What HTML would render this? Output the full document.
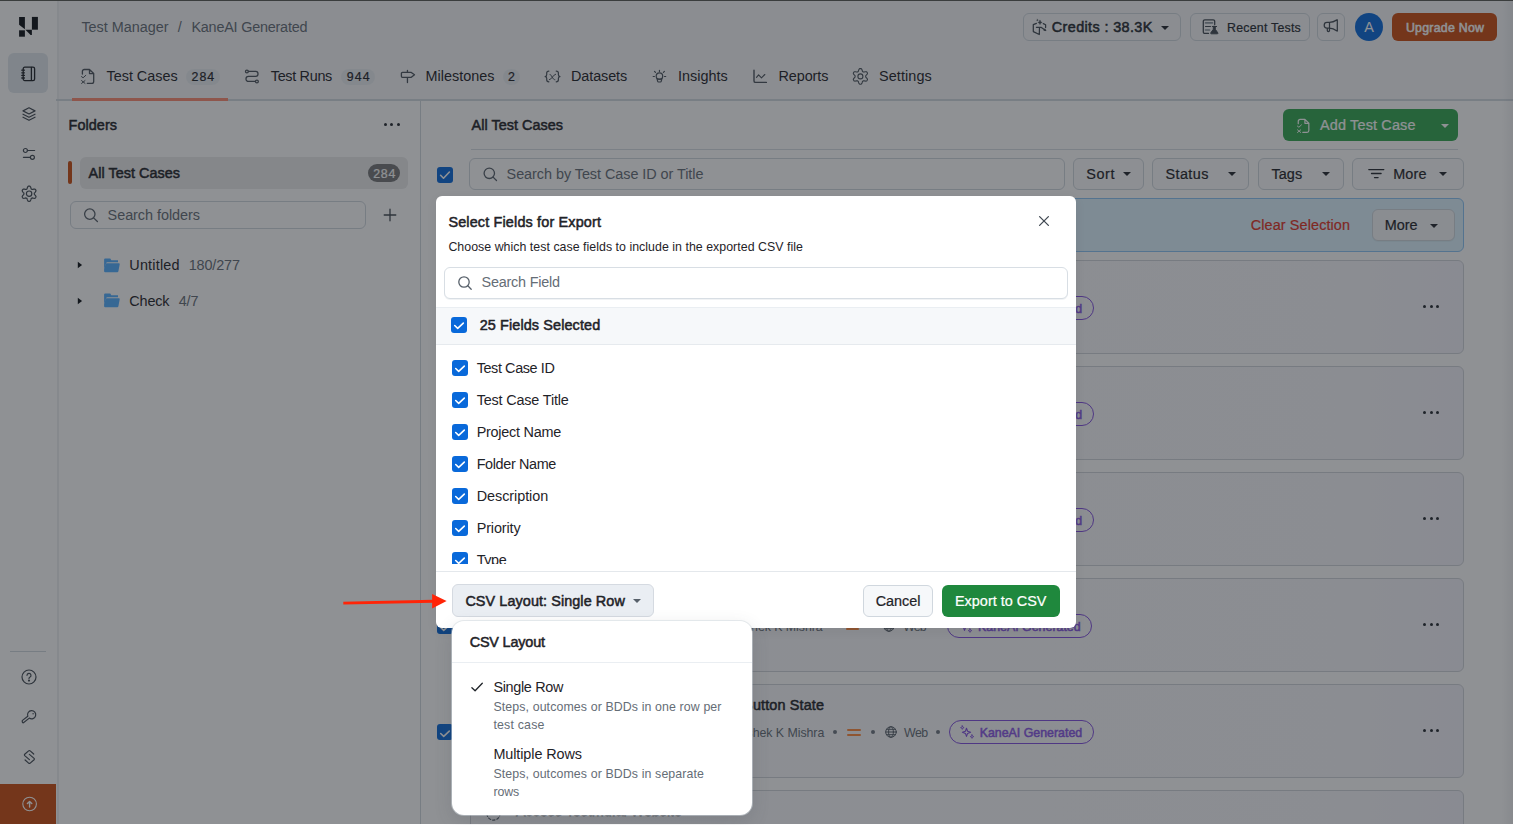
<!DOCTYPE html>
<html lang="en">
<head>
<meta charset="utf-8">
<title>Test Manager - KaneAI Generated</title>
<style>
*{box-sizing:border-box;margin:0;padding:0}
html,body{width:1513px;height:825px;overflow:hidden;background:#fff}
body{font-family:"Liberation Sans",sans-serif;position:relative;color:#1f2328}
.abs,.t,svg.i{position:absolute}
.t{white-space:pre;line-height:20px;height:20px}
#base{position:absolute;left:0;top:0;width:1513px;height:824px;background:#fff;overflow:hidden}
#overlay{position:absolute;left:0;top:0;width:1513px;height:824px;background:rgba(27,31,36,.49)}
.btn{position:absolute;border:1px solid #d0d7de;border-radius:6px;background:#f6f8fa}
.hb{background:transparent}
.card{position:absolute;left:469.5px;width:994.5px;height:93.8px;border:1px solid #d1d5da;border-radius:6px;background:linear-gradient(90deg,#fbfbfd 0%,#f8f8fc 88%,#f4f3fb 100%)}
.cb{position:absolute;width:16px;height:16px;border-radius:3px;background:#0969da}
.pill{position:absolute;height:24px;border:1px solid #8250df;border-radius:12px}
.caret{position:absolute;width:0;height:0;border-left:4px solid transparent;border-right:4px solid transparent;border-top:4px solid #24292f}
.dots{position:absolute;width:17px;height:3px}
.dots i{position:absolute;top:0;width:3px;height:3px;border-radius:50%;background:#24292f}
.dot{position:absolute;width:4px;height:4px;border-radius:50%;background:#6e7781}
svg.i{overflow:visible;fill:none;stroke-linecap:round;stroke-linejoin:round}
</style>
</head>
<body>
<div id="base">
<!-- sidebar -->
<div class="abs" style="left:56px;top:0;width:1457px;height:99px;background:#f7f8fa"></div>
<div class="abs" style="left:0;top:0;width:58.5px;height:824px;background:#fff;border-right:2.2px solid #eef0f2"></div>
<svg class="i" style="left:0;top:0" width="56" height="50" viewBox="0 0 56 50"><g fill="#0d1117" stroke="none">
<polygon points="19.1,16.9 24.9,16.9 24.9,29.3 19.1,24.7"/>
<polygon points="19.1,30.3 24.9,30.3 24.9,36.7 19.1,36.7"/>
<polygon points="25.4,29.7 31.9,29.7 31.9,35.1 30.6,35.1"/>
<polygon points="31.9,16.9 37.9,16.9 37.9,29.7 31.9,29.7"/>
</g></svg>
<div class="abs" style="left:8px;top:53px;width:40px;height:40px;border-radius:6px;background:#e1e8ee"></div>
<!-- notebook icon -->
<svg class="i" style="left:20px;top:65px" width="18" height="18" viewBox="0 0 18 18" stroke="#1f2328" stroke-width="1.3">
<rect x="3.2" y="2.2" width="11.4" height="13.4" rx="1.6"/><path d="M11.4 2.4v13M1.8 5.2h2.6M1.8 7.8h2.6M1.8 10.4h2.6M1.8 13h2.6"/></svg>
<!-- layers icon -->
<svg class="i" style="left:21px;top:106px" width="16" height="16" viewBox="0 0 16 16" stroke="#424a53" stroke-width="1.2">
<path d="M8 1.8l6 3.1-6 3.1-6-3.1zM2 8.2l6 3.1 6-3.1M2 11.2l6 3.1 6-3.1"/></svg>
<!-- sliders icon -->
<svg class="i" style="left:21px;top:146px" width="16" height="16" viewBox="0 0 16 16" stroke="#424a53" stroke-width="1.2">
<circle cx="4.4" cy="4.5" r="2"/><path d="M6.6 4.5h7"/><circle cx="11.4" cy="11.3" r="2"/><path d="M2.4 11.3h6.8"/></svg>
<!-- gear icon -->
<svg class="i" style="left:20px;top:185px" width="18" height="18" viewBox="0 0 18 18" stroke="#424a53" stroke-width="1.2"><path d="M14.30 8.70 14.29 8.36 14.39 8.00 14.81 7.56 15.28 7.04 15.70 6.46 15.99 5.84 15.92 5.34 15.68 4.90 15.42 4.48 15.02 4.16 14.34 4.10 13.63 4.17 12.94 4.32 12.35 4.46 11.99 4.38 11.70 4.20 11.40 4.04 11.14 3.77 10.97 3.18 10.76 2.52 10.46 1.86 10.07 1.30 9.60 1.12 9.10 1.10 8.60 1.12 8.13 1.30 7.74 1.86 7.44 2.52 7.23 3.18 7.06 3.77 6.80 4.04 6.50 4.20 6.21 4.38 5.85 4.46 5.26 4.32 4.57 4.17 3.86 4.10 3.18 4.16 2.78 4.48 2.52 4.90 2.28 5.34 2.21 5.84 2.50 6.46 2.92 7.04 3.39 7.56 3.81 8.00 3.91 8.36 3.90 8.70 3.91 9.04 3.81 9.40 3.39 9.84 2.92 10.36 2.50 10.94 2.21 11.56 2.28 12.06 2.52 12.50 2.78 12.92 3.18 13.24 3.86 13.30 4.57 13.23 5.26 13.08 5.85 12.94 6.21 13.02 6.50 13.20 6.80 13.36 7.06 13.63 7.23 14.22 7.44 14.88 7.74 15.54 8.13 16.10 8.60 16.28 9.10 16.30 9.60 16.28 10.07 16.10 10.46 15.54 10.76 14.88 10.97 14.22 11.14 13.63 11.40 13.36 11.70 13.20 11.99 13.02 12.35 12.94 12.94 13.08 13.63 13.23 14.34 13.30 15.02 13.24 15.42 12.92 15.68 12.50 15.92 12.06 15.99 11.56 15.70 10.94 15.28 10.36 14.81 9.84 14.39 9.40 14.29 9.04z"/><circle cx="9.1" cy="8.7" r="2.7"/></svg>
<div class="abs" style="left:10px;top:651px;width:36px;height:1px;background:#d0d7de"></div>
<!-- help -->
<svg class="i" style="left:21px;top:669px" width="16" height="16" viewBox="0 0 16 16" stroke="#424a53" stroke-width="1.2">
<circle cx="8" cy="8" r="7"/><path d="M6 6.300a2 2 0 1 1 2.800 1.900c-.5.300-.8.600-.8 1.200"/><circle cx="8" cy="11.600" r=".5" fill="#424a53"/></svg>
<!-- key -->
<svg class="i" style="left:21px;top:708px" width="16" height="16" viewBox="0 0 16 16" stroke="#424a53" stroke-width="1.200"><path d="M8.300 10.100a4.100 4.100 0 1 0-1.500-1.900L1.500 12.400a.8.800 0 0 0-.3.800l.2 1a.7.700 0 0 0 1 .5l5.900-4.600z"/><circle cx="12.100" cy="5.700" r=".7" fill="#424a53" stroke="none"/></svg>
<!-- S diamond -->
<svg class="i" style="left:21px;top:749px" width="16" height="16" viewBox="0 0 16 16" stroke="#424a53" stroke-width="1.200"><path d="M12.700 5L9.200 1.900a1.200 1.200 0 0 0-1.600 0L3.700 5.300a.9.900 0 0 0 0 1.300L8.400 10.600"/><path d="M4.100 11L7.600 14.100a1.200 1.200 0 0 0 1.600 0L13.100 10.700a.9.900 0 0 0 0-1.300L8.400 5.400"/></svg>
<div class="abs" style="left:0;top:784px;width:56px;height:40px;background:#cb4d12"></div>
<svg class="i" style="left:22px;top:796px" width="16" height="16" viewBox="0 0 16 16" stroke="#ffffff" stroke-width="1.1">
<circle cx="7.600" cy="8" r="6.800"/><path d="M7.600 11V5.600M5.400 7.600l2.200-2.200 2.200 2.200" stroke-width="1.400"/></svg>

<!-- header buttons -->
<div class="btn hb" style="left:1023px;top:13px;width:158px;height:28px"></div>
<div class="caret" style="left:1160.7px;top:25.8px"></div>
<svg class="i" style="left:1031px;top:19px" width="16" height="17" viewBox="0 0 16 17" stroke="#424a53" stroke-width="1.25"><path d="M5.400 4.300L2.300 5.600V12.600L8.300 15.500L8.500 8.300M5.400 8.300H10L14.300 11.300M12.300 4.600L14.600 5.700V8.400"/><path d="M14.700 11.600l-1.900-.2.900-1.400z" fill="#424a53" stroke-width=".6"/><path d="M9 1.300l.65 1.500 1.500.65-1.500.65L9 5.600l-.65-1.500-1.500-.65 1.500-.65z" fill="#424a53" stroke-width=".5"/><path d="M6.400 .2l.25.700.7.250-.7.250-.250.700-.250-.7-.7-.250.7-.250z" fill="#424a53" stroke-width=".3"/></svg>
<div class="btn hb" style="left:1190px;top:13px;width:120px;height:28px"></div>
<svg class="i" style="left:1202px;top:19px" width="18" height="16" viewBox="0 0 18 16" stroke="#424a53" stroke-width="1.300">
<path d="M6.500 14.400H2.800a1.500 1.500 0 0 1-1.500-1.500V2.300A1.500 1.500 0 0 1 2.800 .8h8.400a1.500 1.500 0 0 1 1.500 1.500v3.200"/><path d="M3.500 3.900h7" stroke="#8c959f" stroke-width="1.600"/><path d="M3.500 7.500h5" stroke-width="1.100"/><path d="M3.500 11h4" stroke="#8c959f" stroke-width="1.600"/>
<path d="M10.300 7.500h4.300M11.300 7.700v2.600l-2.500 3.500a.6.600 0 0 0 .5 1h6a.6.600 0 0 0 .5-1l-2.500-3.500V7.700z" fill="#424a53" stroke-width="1"/></svg>
<div class="btn hb" style="left:1317px;top:13px;width:28px;height:28px"></div>
<svg class="i" style="left:1323px;top:19px" width="16" height="16" viewBox="0 0 16 16" stroke="#424a53" stroke-width="1.250">
<path d="M6.500 3.400H4a2.800 2.800 0 0 0 0 5.600h2.500zM6.500 3.400C9.500 3.400 11.500 2.500 14 .9M14.300 .8v11.300M6.500 9c3 0 5 1 7.500 2.900M4.300 9v2.600a1.100 1.100 0 0 0 2.200 0V9"/></svg>
<div class="abs" style="left:1355px;top:13px;width:28px;height:28px;border-radius:50%;background:#0969da"></div>
<div class="abs" style="left:1392px;top:13px;width:105px;height:28px;border-radius:6px;background:#cb4d12"></div>

<!-- tabs -->
<div class="abs" style="left:56px;top:99px;width:1457px;height:2px;background:#d3dae0"></div>
<div class="abs" style="left:72px;top:98.2px;width:156.1px;height:2.5px;background:#fd8c73"></div>
<div class="abs" style="left:186px;top:68.5px;width:34px;height:16px;border-radius:8px;background:#eaeef2"></div>
<div class="abs" style="left:341px;top:68.5px;width:34px;height:16px;border-radius:8px;background:#eaeef2"></div>
<div class="abs" style="left:503px;top:68.5px;width:17px;height:16px;border-radius:8px;background:#eaeef2"></div>
<!-- tab icons -->
<svg class="i" style="left:80px;top:68px" width="16" height="17" viewBox="0 0 16 17" stroke="#4b535c" stroke-width="1.300">
<path d="M2.400 6V3.400a1.900 1.900 0 0 1 1.900-1.900h5.200l4.200 3.900v8a1.900 1.900 0 0 1-1.900 1.900H7.300M9.500 1.500v4.100h4.100"/><path d="M1.500 8.600l1.600 1.200 2.700-2.500M1.600 12.600l3.400 2.800M5 12.600l-3.400 2.800" stroke-width="1"/></svg>
<svg class="i" style="left:244px;top:68px" width="16" height="17" viewBox="0 0 16 17" stroke="#4b535c" stroke-width="1.250">
<circle cx="2.900" cy="3.450" r="1.450"/><path d="M4.400 3.450h7.300a2.480 2.480 0 0 1 0 4.950H4.500a2.520 2.520 0 0 0 0 5.050h6.900"/><circle cx="12.900" cy="13.450" r="1.450"/></svg>
<svg class="i" style="left:400px;top:68px" width="16" height="17" viewBox="0 0 16 17" stroke="#4b535c" stroke-width="1.300">
<path d="M7.450 2.300v2.100M7.450 9.300v5.300M2.400 4.400h8.900l3.200 2.400-3.200 2.500H2.400a1 1 0 0 1-1-1V5.400a1 1 0 0 1 1-1z"/></svg>
<svg class="i" style="left:544px;top:68px" width="17" height="17" viewBox="0 0 17 17" stroke="#4b535c" stroke-width="1.200">
<path d="M4.900 3.100c-1.600 0-2.200.6-2.200 2v1.700c0 1.100-.5 1.750-1.600 1.750 1.100 0 1.600.65 1.600 1.750v1.500c0 1.400.6 2 2.200 2M12.200 3.100c1.600 0 2.200.6 2.200 2v1.700c0 1.100.5 1.750 1.600 1.750-1.100 0-1.600.65-1.600 1.750v1.500c0 1.400-.6 2-2.200 2"/><path d="M5.300 11.800c2.500-.3 4-5.300 6.300-5.600M6 6.400c1.600-.4 2.400 5.600 4.900 5.400" stroke-width="1"/></svg>
<svg class="i" style="left:652px;top:68px" width="16" height="17" viewBox="0 0 16 17" stroke="#4b535c" stroke-width="1.200">
<circle cx="7.450" cy="8.100" r="3.250"/><path d="M5 10.700l.7 2.700a.8.800 0 0 0 .8.600h1.900a.8.800 0 0 0 .8-.6l.7-2.700M5.200 11.100h4.500M7.450 2.300v1.100M2.500 3.400l1 1M12.400 3.400l-1 1M1.200 8.500h1.200M12.500 8.500h1.200"/></svg>
<svg class="i" style="left:752px;top:68px" width="16" height="17" viewBox="0 0 16 17" stroke="#4b535c" stroke-width="1.400">
<path d="M2 2.300v10.600a1.500 1.500 0 0 0 1.500 1.500h10.900"/><path d="M4.500 9.400l2.100-2.600 2.900 3 3.300-3.300" stroke-width="1.100"/></svg>
<svg class="i" style="left:852px;top:68px" width="17" height="17" viewBox="0 0 17 17" stroke="#4b535c" stroke-width="1.100">
<path d="M13.70 8.40 13.69 8.05 13.80 7.69 14.24 7.24 14.73 6.70 15.17 6.10 15.47 5.47 15.40 4.95 15.15 4.50 14.89 4.07 14.47 3.74 13.77 3.69 13.03 3.77 12.32 3.93 11.71 4.08 11.34 3.99 11.05 3.81 10.74 3.65 10.48 3.37 10.31 2.76 10.10 2.07 9.79 1.39 9.40 0.81 8.91 0.62 8.40 0.60 7.89 0.62 7.40 0.81 7.01 1.39 6.70 2.07 6.49 2.76 6.32 3.37 6.06 3.65 5.75 3.81 5.46 3.99 5.09 4.08 4.48 3.93 3.77 3.77 3.03 3.69 2.33 3.74 1.91 4.07 1.65 4.50 1.40 4.95 1.33 5.47 1.63 6.10 2.07 6.70 2.56 7.24 3.00 7.69 3.11 8.05 3.10 8.40 3.11 8.75 3.00 9.11 2.56 9.56 2.07 10.10 1.63 10.70 1.33 11.33 1.40 11.85 1.65 12.30 1.91 12.73 2.33 13.06 3.03 13.11 3.77 13.03 4.48 12.87 5.09 12.72 5.46 12.81 5.75 12.99 6.06 13.15 6.32 13.43 6.49 14.04 6.70 14.73 7.01 15.41 7.40 15.99 7.89 16.18 8.40 16.20 8.91 16.18 9.40 15.99 9.79 15.41 10.10 14.73 10.31 14.04 10.48 13.43 10.74 13.15 11.05 12.99 11.34 12.81 11.71 12.72 12.32 12.87 13.03 13.03 13.77 13.11 14.47 13.06 14.89 12.73 15.15 12.30 15.40 11.85 15.47 11.33 15.17 10.70 14.73 10.10 14.24 9.56 13.80 9.11 13.69 8.75z"/><circle cx="8.400" cy="8.400" r="2.500"/></svg>

<!-- folders panel -->
<div class="abs" style="left:420px;top:101px;width:1px;height:723px;background:#d0d7de"></div>
<div class="dots" style="left:383.8px;top:123.1px"><i style="left:0"></i><i style="left:6.6px"></i><i style="left:13.2px"></i></div>
<div class="abs" style="left:68px;top:161px;width:4px;height:22.500px;border-radius:2px;background:#cb4d12"></div>
<div class="abs" style="left:80px;top:157px;width:328px;height:32px;border-radius:6px;background:#ebebec"></div>
<div class="abs" style="left:368px;top:164px;width:32px;height:18px;border-radius:9px;background:#767778"></div>
<div class="abs" style="left:70px;top:201px;width:296px;height:28px;border:1px solid #d0d7de;border-radius:6px;background:#fff"></div>
<svg class="i" style="left:83px;top:207px" width="16" height="16" viewBox="0 0 16 16" stroke="#57606a" stroke-width="1.300"><circle cx="6.800" cy="7.100" r="5.200"/><path d="M10.600 10.900l3.800 3.600"/></svg>
<svg class="i" style="left:383px;top:208px" width="14" height="14" viewBox="0 0 14 14" stroke="#424a53" stroke-width="1.300"><path d="M7 1.200v11.600M1.200 7h11.600"/></svg>
<svg class="i" style="left:77px;top:261px" width="6" height="8" viewBox="0 0 6 8"><path d="M.8 .7L5.100 4 .8 7.300z" fill="#0d1117" stroke="none"/></svg>
<svg class="i" style="left:77px;top:296.700px" width="6" height="8" viewBox="0 0 6 8"><path d="M.8 .7L5.100 4 .8 7.300z" fill="#0d1117" stroke="none"/></svg>
<svg class="i" style="left:104px;top:257.500px" width="16" height="15" viewBox="0 0 16 15"><path d="M.1 1.400a1 1 0 0 1 1-1h5.200l1 1.900h6.700v1.900H3.300a1.200 1.200 0 0 0-1.100.8L.1 11z" fill="#54aeff"/><path d="M2.600 5.200h12.200a.9.900 0 0 1 .9 1.100l-1.300 7a1.200 1.200 0 0 1-1.200 1H1.200a1.100 1.100 0 0 1-1.100-1.100V11l1.500-5a1 1 0 0 1 1-.8z" fill="#54aeff"/></svg>
<svg class="i" style="left:104px;top:293.200px" width="16" height="15" viewBox="0 0 16 15"><path d="M.1 1.400a1 1 0 0 1 1-1h5.200l1 1.900h6.700v1.900H3.300a1.200 1.200 0 0 0-1.100.8L.1 11z" fill="#54aeff"/><path d="M2.600 5.200h12.200a.9.900 0 0 1 .9 1.100l-1.300 7a1.200 1.200 0 0 1-1.200 1H1.200a1.100 1.100 0 0 1-1.100-1.100V11l1.500-5a1 1 0 0 1 1-.8z" fill="#54aeff"/></svg>

<!-- main heading -->
<div class="abs" style="left:1282.500px;top:109px;width:175.500px;height:32px;border-radius:6px;background:#33a851"></div>
<div class="caret" style="left:1440.8px;top:123.6px;border-top-color:#fff"></div>
<svg class="i" style="left:1295.8px;top:117.7px" width="15" height="16" viewBox="0 0 16 17" stroke="#ffffff" stroke-width="1.300">
<path d="M2.400 6V3.400a1.900 1.900 0 0 1 1.900-1.900h5.200l4.200 3.900v8a1.900 1.900 0 0 1-1.900 1.900H7.300M9.500 1.500v4.100h4.100"/><path d="M1.500 8.600l1.600 1.200 2.700-2.500M1.600 12.600l3.400 2.800M5 12.600l-3.400 2.800" stroke-width="1"/></svg>
<div class="abs" style="left:471px;top:149px;width:987px;height:1px;background:#d8dee4"></div>
<div class="cb" style="left:437.2px;top:167px;width:15.6px;height:15.6px"></div>
<svg class="i" style="left:437px;top:167px" width="16" height="16" viewBox="0 0 16 16" stroke="#fff" stroke-width="1.600"><path d="M3.600 8.300l2.900 2.900 5.900-6.200"/></svg>
<div class="abs" style="left:469px;top:158px;width:596px;height:31.5px;border:1px solid #d0d7de;border-radius:6px;background:#fff"></div>
<svg class="i" style="left:482px;top:166px" width="16" height="16" viewBox="0 0 16 16" stroke="#57606a" stroke-width="1.300"><circle cx="7.300" cy="7.300" r="5.200"/><path d="M11.100 11.100l3.400 3.400"/></svg>
<div class="btn" style="left:1073px;top:158px;width:70.5px;height:31.5px;background:#fbfcfd"></div><div class="caret" style="left:1123px;top:172.3px"></div>
<div class="btn" style="left:1152px;top:158px;width:97px;height:31.5px;background:#fbfcfd"></div><div class="caret" style="left:1228px;top:172.3px"></div>
<div class="btn" style="left:1257.500px;top:158px;width:86px;height:31.5px;background:#fbfcfd"></div><div class="caret" style="left:1322.1px;top:172.3px"></div>
<div class="btn" style="left:1351.500px;top:158px;width:112.5px;height:31.5px;background:#fbfcfd"></div><div class="caret" style="left:1439px;top:172.3px"></div>
<svg class="i" style="left:1368px;top:166px" width="17" height="16" viewBox="0 0 17 16" stroke="#24292f" stroke-width="1.300"><path d="M.8 3.600h15M3.500 7.500h9.600M6.500 11.600h3.600"/></svg>

<!-- selection banner -->
<div class="abs" style="left:469.5px;top:198px;width:994.5px;height:54px;border:1px solid #8cc4f5;border-radius:6px;background:#ddf4ff"></div>
<div class="btn" style="left:1371.5px;top:209.2px;width:83px;height:31.8px;box-shadow:0 1px 0 rgba(27,31,36,.04)"></div><div class="caret" style="left:1430px;top:223.5px"></div>
<div class="card" style="top:260.0px"></div>
<div class="cb" style="left:437.2px;top:300.3px;width:15.6px;height:15.6px"></div>
<svg class="i" style="left:437px;top:300.5px" width="16" height="16" viewBox="0 0 16 16" stroke="#fff" stroke-width="1.6"><path d="M3.700 8.500L6.700 11.300 12.300 6.100"/></svg>
<div class="dot" style="left:833.2px;top:306.0px"></div>
<div class="dot" style="left:870.7px;top:306.0px"></div>
<div class="dot" style="left:936.4px;top:306.0px"></div>
<div class="abs" style="left:847.4px;top:304.5px;width:13.4px;height:2.3px;border-radius:1px;background:#ff8a3d"></div>
<div class="abs" style="left:847.4px;top:309.6px;width:13.4px;height:2.3px;border-radius:1px;background:#ff8a3d"></div>
<svg class="i" style="left:885px;top:302.0px" width="12" height="12" viewBox="0 0 12 12" stroke="#57606a" stroke-width="1"><circle cx="6" cy="6" r="5.3"/><ellipse cx="6" cy="6" rx="2.4" ry="5.3"/><path d="M.8 6h10.400M1.500 3.300h9M1.500 8.700h9"/></svg>
<div class="pill" style="left:948.5px;top:296.0px;width:145px"></div>
<svg class="i" style="left:959.5px;top:301.0px" width="15" height="15" viewBox="0 0 15 15" stroke="#8250df" stroke-width="1.1"><path d="M6.500 3.200l1.100 3 3 1.100-3 1.100-1.100 3-1.100-3-3-1.100 3-1.100z"/><path d="M2.300 .8l.5 1.300 1.300.5-1.300.5-.5 1.300-.5-1.300L.5 2.600l1.300-.5zM12 9.800l.5 1.300 1.300.5-1.300.5-.5 1.300-.5-1.300-1.300-.5 1.300-.5z" stroke-width=".8"/></svg>
<div class="dots" style="left:1423px;top:305.0px"><i style="left:0"></i><i style="left:6.6px"></i><i style="left:13.2px"></i></div>
<div class="card" style="top:366.0px"></div>
<div class="cb" style="left:437.2px;top:406.3px;width:15.6px;height:15.6px"></div>
<svg class="i" style="left:437px;top:406.5px" width="16" height="16" viewBox="0 0 16 16" stroke="#fff" stroke-width="1.6"><path d="M3.700 8.500L6.700 11.300 12.300 6.100"/></svg>
<div class="dot" style="left:833.2px;top:412.0px"></div>
<div class="dot" style="left:870.7px;top:412.0px"></div>
<div class="dot" style="left:936.4px;top:412.0px"></div>
<div class="abs" style="left:847.4px;top:410.5px;width:13.4px;height:2.3px;border-radius:1px;background:#ff8a3d"></div>
<div class="abs" style="left:847.4px;top:415.6px;width:13.4px;height:2.3px;border-radius:1px;background:#ff8a3d"></div>
<svg class="i" style="left:885px;top:408.0px" width="12" height="12" viewBox="0 0 12 12" stroke="#57606a" stroke-width="1"><circle cx="6" cy="6" r="5.3"/><ellipse cx="6" cy="6" rx="2.4" ry="5.3"/><path d="M.8 6h10.400M1.500 3.300h9M1.500 8.700h9"/></svg>
<div class="pill" style="left:948.5px;top:402.0px;width:145px"></div>
<svg class="i" style="left:959.5px;top:407.0px" width="15" height="15" viewBox="0 0 15 15" stroke="#8250df" stroke-width="1.1"><path d="M6.500 3.200l1.100 3 3 1.100-3 1.100-1.100 3-1.100-3-3-1.100 3-1.100z"/><path d="M2.300 .8l.5 1.300 1.300.5-1.300.5-.5 1.300-.5-1.300L.5 2.600l1.300-.5zM12 9.800l.5 1.300 1.300.5-1.300.5-.5 1.300-.5-1.300-1.300-.5 1.300-.5z" stroke-width=".8"/></svg>
<div class="dots" style="left:1423px;top:411.0px"><i style="left:0"></i><i style="left:6.6px"></i><i style="left:13.2px"></i></div>
<div class="card" style="top:472.0px"></div>
<div class="cb" style="left:437.2px;top:512.3px;width:15.6px;height:15.6px"></div>
<svg class="i" style="left:437px;top:512.5px" width="16" height="16" viewBox="0 0 16 16" stroke="#fff" stroke-width="1.6"><path d="M3.700 8.500L6.700 11.300 12.300 6.100"/></svg>
<div class="dot" style="left:833.2px;top:518.0px"></div>
<div class="dot" style="left:870.7px;top:518.0px"></div>
<div class="dot" style="left:936.4px;top:518.0px"></div>
<div class="abs" style="left:847.4px;top:516.5px;width:13.4px;height:2.3px;border-radius:1px;background:#ff8a3d"></div>
<div class="abs" style="left:847.4px;top:521.6px;width:13.4px;height:2.3px;border-radius:1px;background:#ff8a3d"></div>
<svg class="i" style="left:885px;top:514.0px" width="12" height="12" viewBox="0 0 12 12" stroke="#57606a" stroke-width="1"><circle cx="6" cy="6" r="5.3"/><ellipse cx="6" cy="6" rx="2.4" ry="5.3"/><path d="M.8 6h10.400M1.500 3.300h9M1.500 8.700h9"/></svg>
<div class="pill" style="left:948.5px;top:508.0px;width:145px"></div>
<svg class="i" style="left:959.5px;top:513.0px" width="15" height="15" viewBox="0 0 15 15" stroke="#8250df" stroke-width="1.1"><path d="M6.500 3.200l1.100 3 3 1.100-3 1.100-1.100 3-1.100-3-3-1.100 3-1.100z"/><path d="M2.300 .8l.5 1.300 1.300.5-1.300.5-.5 1.300-.5-1.300L.5 2.600l1.300-.5zM12 9.800l.5 1.300 1.300.5-1.300.5-.5 1.300-.5-1.300-1.300-.5 1.300-.5z" stroke-width=".8"/></svg>
<div class="dots" style="left:1423px;top:517.0px"><i style="left:0"></i><i style="left:6.6px"></i><i style="left:13.2px"></i></div>
<div class="card" style="top:578.0px"></div>
<div class="cb" style="left:437.2px;top:618.3px;width:15.6px;height:15.6px"></div>
<svg class="i" style="left:437px;top:618.5px" width="16" height="16" viewBox="0 0 16 16" stroke="#fff" stroke-width="1.6"><path d="M3.700 8.500L6.700 11.300 12.300 6.100"/></svg>
<div class="dot" style="left:831.6px;top:624.0px"></div>
<div class="dot" style="left:869.1px;top:624.0px"></div>
<div class="dot" style="left:934.8px;top:624.0px"></div>
<div class="abs" style="left:845.8px;top:622.5px;width:13.4px;height:2.3px;border-radius:1px;background:#ff8a3d"></div>
<div class="abs" style="left:845.8px;top:627.6px;width:13.4px;height:2.3px;border-radius:1px;background:#ff8a3d"></div>
<svg class="i" style="left:883.4px;top:620.0px" width="12" height="12" viewBox="0 0 12 12" stroke="#57606a" stroke-width="1"><circle cx="6" cy="6" r="5.3"/><ellipse cx="6" cy="6" rx="2.4" ry="5.3"/><path d="M.8 6h10.400M1.500 3.300h9M1.500 8.700h9"/></svg>
<div class="pill" style="left:946.9px;top:614.0px;width:145px"></div>
<svg class="i" style="left:957.9px;top:619.0px" width="15" height="15" viewBox="0 0 15 15" stroke="#8250df" stroke-width="1.1"><path d="M6.500 3.200l1.100 3 3 1.100-3 1.100-1.100 3-1.100-3-3-1.100 3-1.100z"/><path d="M2.300 .8l.5 1.300 1.300.5-1.300.5-.5 1.300-.5-1.300L.5 2.600l1.300-.5zM12 9.800l.5 1.300 1.300.5-1.300.5-.5 1.300-.5-1.300-1.300-.5 1.300-.5z" stroke-width=".8"/></svg>
<div class="dots" style="left:1423px;top:623.0px"><i style="left:0"></i><i style="left:6.6px"></i><i style="left:13.2px"></i></div>
<div class="card" style="top:684.0px"></div>
<div class="cb" style="left:437.2px;top:724.3px;width:15.6px;height:15.6px"></div>
<svg class="i" style="left:437px;top:724.5px" width="16" height="16" viewBox="0 0 16 16" stroke="#fff" stroke-width="1.6"><path d="M3.700 8.500L6.700 11.300 12.300 6.100"/></svg>
<div class="dot" style="left:833.2px;top:730.0px"></div>
<div class="dot" style="left:870.7px;top:730.0px"></div>
<div class="dot" style="left:936.4px;top:730.0px"></div>
<div class="abs" style="left:847.4px;top:728.5px;width:13.4px;height:2.3px;border-radius:1px;background:#ff8a3d"></div>
<div class="abs" style="left:847.4px;top:733.6px;width:13.4px;height:2.3px;border-radius:1px;background:#ff8a3d"></div>
<svg class="i" style="left:885px;top:726.0px" width="12" height="12" viewBox="0 0 12 12" stroke="#57606a" stroke-width="1"><circle cx="6" cy="6" r="5.3"/><ellipse cx="6" cy="6" rx="2.4" ry="5.3"/><path d="M.8 6h10.400M1.500 3.300h9M1.500 8.700h9"/></svg>
<div class="pill" style="left:948.5px;top:720.0px;width:145px"></div>
<svg class="i" style="left:959.5px;top:725.0px" width="15" height="15" viewBox="0 0 15 15" stroke="#8250df" stroke-width="1.1"><path d="M6.500 3.200l1.100 3 3 1.100-3 1.100-1.100 3-1.100-3-3-1.100 3-1.100z"/><path d="M2.300 .8l.5 1.300 1.300.5-1.300.5-.5 1.300-.5-1.300L.5 2.600l1.300-.5zM12 9.800l.5 1.300 1.300.5-1.300.5-.5 1.300-.5-1.300-1.300-.5 1.300-.5z" stroke-width=".8"/></svg>
<div class="dots" style="left:1423px;top:729.0px"><i style="left:0"></i><i style="left:6.6px"></i><i style="left:13.2px"></i></div>
<div class="card" style="top:790.0px"></div>
<svg class="i" style="left:486px;top:806.0px" width="15" height="15" viewBox="0 0 15 15" stroke="#57606a" stroke-width="1.2" stroke-dasharray="2.4 2"><circle cx="7.5" cy="7.5" r="6.6"/></svg>
<!-- right strip -->
<div class="abs" style="left:1502px;top:1px;width:11px;height:823px;background:linear-gradient(90deg,rgba(110,119,129,0),rgba(110,119,129,.10))"></div>

<span class="t" style="left:81.4px;top:17.0px;font-size:14.42px;color:#656d76;letter-spacing:-0.016px;">Test Manager</span>
<span class="t" style="left:177.8px;top:17.0px;font-size:14.42px;color:#656d76;letter-spacing:0.384px;">/</span>
<span class="t" style="left:191.4px;top:17.0px;font-size:14.42px;color:#656d76;letter-spacing:-0.216px;">KaneAI Generated</span>
<span class="t" style="left:1051.8px;top:17.0px;font-size:14.42px;color:#24292f;letter-spacing:0.372px;-webkit-text-stroke:0.52px #24292f;">Credits : 38.3K</span>
<span class="t" style="left:1227.0px;top:18.0px;font-size:12.36px;color:#24292f;letter-spacing:0.235px;-webkit-text-stroke:0.22px #24292f;">Recent Tests</span>
<span class="t" style="left:1364.2px;top:17.0px;font-size:14.42px;color:#ffffff;letter-spacing:-0.109px;">A</span>
<span class="t" style="left:1405.9px;top:18.0px;font-size:12.36px;color:#ffffff;letter-spacing:0.252px;-webkit-text-stroke:0.52px #ffffff;">Upgrade Now</span>
<span class="t" style="left:106.6px;top:66.0px;font-size:14.42px;color:#1f2328;letter-spacing:-0.030px;">Test Cases</span>
<span class="t" style="left:191.6px;top:67.0px;font-size:12.36px;color:#1f2328;letter-spacing:0.938px;-webkit-text-stroke:0.22px #1f2328;">284</span>
<span class="t" style="left:270.8px;top:66.0px;font-size:14.42px;color:#1f2328;letter-spacing:-0.320px;">Test Runs</span>
<span class="t" style="left:346.8px;top:67.0px;font-size:12.36px;color:#1f2328;letter-spacing:1.088px;-webkit-text-stroke:0.22px #1f2328;">944</span>
<span class="t" style="left:425.5px;top:66.0px;font-size:14.42px;color:#1f2328;letter-spacing:0.016px;">Milestones</span>
<span class="t" style="left:508.0px;top:67.0px;font-size:12.36px;color:#1f2328;letter-spacing:0.125px;-webkit-text-stroke:0.22px #1f2328;">2</span>
<span class="t" style="left:571.0px;top:66.0px;font-size:14.42px;color:#1f2328;letter-spacing:-0.094px;">Datasets</span>
<span class="t" style="left:678.0px;top:66.0px;font-size:14.42px;color:#1f2328;letter-spacing:-0.008px;">Insights</span>
<span class="t" style="left:778.5px;top:66.0px;font-size:14.42px;color:#1f2328;letter-spacing:-0.092px;">Reports</span>
<span class="t" style="left:879.0px;top:66.0px;font-size:14.42px;color:#1f2328;letter-spacing:0.105px;">Settings</span>
<span class="t" style="left:68.5px;top:115.0px;font-size:14.42px;color:#1f2328;letter-spacing:0.076px;-webkit-text-stroke:0.52px #1f2328;">Folders</span>
<span class="t" style="left:88.6px;top:163.0px;font-size:14.42px;color:#1f2328;letter-spacing:0.030px;-webkit-text-stroke:0.52px #1f2328;">All Test Cases</span>
<span class="t" style="left:373.2px;top:163.5px;font-size:12.36px;color:#ffffff;letter-spacing:0.738px;-webkit-text-stroke:0.22px #ffffff;">284</span>
<span class="t" style="left:107.6px;top:205.0px;font-size:14.42px;color:#656d76;letter-spacing:-0.038px;">Search folders</span>
<span class="t" style="left:129.3px;top:255.0px;font-size:14.42px;color:#1f2328;letter-spacing:0.192px;">Untitled</span>
<span class="t" style="left:188.7px;top:255.0px;font-size:14.42px;color:#656d76;letter-spacing:-0.130px;">180/277</span>
<span class="t" style="left:129.3px;top:291.0px;font-size:14.42px;color:#1f2328;letter-spacing:-0.161px;">Check</span>
<span class="t" style="left:178.7px;top:291.0px;font-size:14.42px;color:#656d76;letter-spacing:-0.116px;">4/7</span>
<span class="t" style="left:471.6px;top:115.0px;font-size:14.42px;color:#1f2328;letter-spacing:0.030px;-webkit-text-stroke:0.52px #1f2328;">All Test Cases</span>
<span class="t" style="left:1320.1px;top:115.0px;font-size:14.42px;color:#ffffff;letter-spacing:0.164px;-webkit-text-stroke:0.22px #ffffff;">Add Test Case</span>
<span class="t" style="left:506.6px;top:164.0px;font-size:14.42px;color:#656d76;letter-spacing:-0.047px;">Search by Test Case ID or Title</span>
<span class="t" style="left:1086.3px;top:164.0px;font-size:14.42px;color:#1f2328;letter-spacing:0.593px;-webkit-text-stroke:0.22px #1f2328;">Sort</span>
<span class="t" style="left:1165.4px;top:164.0px;font-size:14.42px;color:#1f2328;letter-spacing:0.451px;-webkit-text-stroke:0.22px #1f2328;">Status</span>
<span class="t" style="left:1271.4px;top:164.0px;font-size:14.42px;color:#1f2328;letter-spacing:0.121px;-webkit-text-stroke:0.22px #1f2328;">Tags</span>
<span class="t" style="left:1393.2px;top:164.0px;font-size:14.42px;color:#1f2328;letter-spacing:0.157px;-webkit-text-stroke:0.22px #1f2328;">More</span>
<span class="t" style="left:1250.8px;top:215.0px;font-size:14.42px;color:#e0311f;letter-spacing:0.107px;-webkit-text-stroke:0.22px #e0311f;">Clear Selection</span>
<span class="t" style="left:1384.8px;top:215.0px;font-size:14.42px;color:#1f2328;letter-spacing:-0.043px;-webkit-text-stroke:0.22px #1f2328;">More</span>
<span class="t" style="left:662.0px;top:271.0px;font-size:14.42px;color:#1f2328;letter-spacing:0.143px;-webkit-text-stroke:0.52px #1f2328;">Verify Login Button State</span>
<span class="t" style="left:722.0px;top:299.0px;font-size:12.36px;color:#656d76;letter-spacing:-0.047px;">Abhishek K Mishra</span>
<span class="t" style="left:904.1px;top:299.0px;font-size:12.36px;color:#656d76;letter-spacing:-0.552px;">Web</span>
<span class="t" style="left:979.7px;top:298.5px;font-size:12.36px;color:#8957e5;letter-spacing:0.007px;-webkit-text-stroke:0.52px #8957e5;">KaneAI Generated</span>
<span class="t" style="left:662.0px;top:377.0px;font-size:14.42px;color:#1f2328;letter-spacing:0.143px;-webkit-text-stroke:0.52px #1f2328;">Verify Login Button State</span>
<span class="t" style="left:722.0px;top:405.0px;font-size:12.36px;color:#656d76;letter-spacing:-0.047px;">Abhishek K Mishra</span>
<span class="t" style="left:904.1px;top:405.0px;font-size:12.36px;color:#656d76;letter-spacing:-0.552px;">Web</span>
<span class="t" style="left:979.7px;top:404.5px;font-size:12.36px;color:#8957e5;letter-spacing:0.007px;-webkit-text-stroke:0.52px #8957e5;">KaneAI Generated</span>
<span class="t" style="left:662.0px;top:483.0px;font-size:14.42px;color:#1f2328;letter-spacing:0.143px;-webkit-text-stroke:0.52px #1f2328;">Verify Login Button State</span>
<span class="t" style="left:722.0px;top:511.0px;font-size:12.36px;color:#656d76;letter-spacing:-0.047px;">Abhishek K Mishra</span>
<span class="t" style="left:904.1px;top:511.0px;font-size:12.36px;color:#656d76;letter-spacing:-0.552px;">Web</span>
<span class="t" style="left:979.7px;top:510.5px;font-size:12.36px;color:#8957e5;letter-spacing:0.007px;-webkit-text-stroke:0.52px #8957e5;">KaneAI Generated</span>
<span class="t" style="left:662.0px;top:589.0px;font-size:14.42px;color:#1f2328;letter-spacing:0.143px;-webkit-text-stroke:0.52px #1f2328;">Verify Login Button State</span>
<span class="t" style="left:720.4px;top:617.0px;font-size:12.36px;color:#656d76;letter-spacing:-0.047px;">Abhishek K Mishra</span>
<span class="t" style="left:903.3px;top:617.0px;font-size:12.36px;color:#656d76;letter-spacing:-0.952px;">Web</span>
<span class="t" style="left:978.1px;top:616.5px;font-size:12.36px;color:#8957e5;letter-spacing:0.007px;-webkit-text-stroke:0.52px #8957e5;">KaneAI Generated</span>
<span class="t" style="left:662.0px;top:695.0px;font-size:14.42px;color:#1f2328;letter-spacing:0.143px;-webkit-text-stroke:0.52px #1f2328;">Verify Login Button State</span>
<span class="t" style="left:722.0px;top:723.0px;font-size:12.36px;color:#656d76;letter-spacing:-0.047px;">Abhishek K Mishra</span>
<span class="t" style="left:904.1px;top:723.0px;font-size:12.36px;color:#656d76;letter-spacing:-0.552px;">Web</span>
<span class="t" style="left:979.7px;top:722.5px;font-size:12.36px;color:#8957e5;letter-spacing:0.007px;-webkit-text-stroke:0.52px #8957e5;">KaneAI Generated</span>
<span class="t" style="left:516.0px;top:801.0px;font-size:14.42px;color:#1f2328;letter-spacing:-0.070px;-webkit-text-stroke:0.52px #1f2328;">Access Testmu.ai Website</span>
</div>
<div id="overlay"></div>
<div class="abs" style="left:0;top:0;width:1513px;height:1px;background:#3a3d3d"></div>
<!-- modal -->
<div class="abs" style="left:436px;top:196px;width:640px;height:432px;border-radius:6px;background:#fff;box-shadow:0 3px 12px rgba(27,31,36,.06)"></div>
<svg class="i" style="left:1038px;top:215px" width="12" height="12" viewBox="0 0 12 12" stroke="#424a53" stroke-width="1.300"><path d="M1.600 1.600l8.800 8.800M10.400 1.600l-8.800 8.800"/></svg>
<div class="abs" style="left:444px;top:266.5px;width:624px;height:32.2px;border:1px solid #d8dee4;border-radius:6px;background:#fff;box-shadow:0 1px 0 rgba(208,215,222,.3)"></div>
<svg class="i" style="left:457px;top:275px" width="16" height="16" viewBox="0 0 16 16" stroke="#57606a" stroke-width="1.300"><circle cx="7" cy="7" r="5.200"/><path d="M10.800 10.800l3.400 3.400"/></svg>
<div class="abs" style="left:436px;top:306.500px;width:640px;height:38px;background:#f6f8fa;border-top:1px solid #eaeef2;border-bottom:1px solid #e6eaee"></div>
<div class="cb" style="left:451px;top:317.2px;width:16.2px;height:16.2px"></div>
<svg class="i" style="left:451px;top:317.2px" width="16" height="16" viewBox="0 0 16 16" stroke="#fff" stroke-width="1.600"><path d="M3.700 8.500L6.700 11.300 12.300 6.100"/></svg>
<div class="abs" style="left:436px;top:345px;width:640px;height:219.300px;overflow:hidden">
<div class="cb" style="left:16px;top:15.300000000000011px"></div>
<svg class="i" style="left:16px;top:15.300000000000011px" width="16" height="16" viewBox="0 0 16 16" stroke="#fff" stroke-width="1.6"><path d="M3.700 8.500L6.700 11.300 12.300 6.100"/></svg>
<div class="cb" style="left:16px;top:47.30000000000001px"></div>
<svg class="i" style="left:16px;top:47.30000000000001px" width="16" height="16" viewBox="0 0 16 16" stroke="#fff" stroke-width="1.6"><path d="M3.700 8.500L6.700 11.300 12.300 6.100"/></svg>
<div class="cb" style="left:16px;top:79.30000000000001px"></div>
<svg class="i" style="left:16px;top:79.30000000000001px" width="16" height="16" viewBox="0 0 16 16" stroke="#fff" stroke-width="1.6"><path d="M3.700 8.500L6.700 11.300 12.300 6.100"/></svg>
<div class="cb" style="left:16px;top:111.30000000000001px"></div>
<svg class="i" style="left:16px;top:111.30000000000001px" width="16" height="16" viewBox="0 0 16 16" stroke="#fff" stroke-width="1.6"><path d="M3.700 8.500L6.700 11.300 12.300 6.100"/></svg>
<div class="cb" style="left:16px;top:143.3px"></div>
<svg class="i" style="left:16px;top:143.3px" width="16" height="16" viewBox="0 0 16 16" stroke="#fff" stroke-width="1.6"><path d="M3.700 8.500L6.700 11.300 12.300 6.100"/></svg>
<div class="cb" style="left:16px;top:175.29999999999995px"></div>
<svg class="i" style="left:16px;top:175.29999999999995px" width="16" height="16" viewBox="0 0 16 16" stroke="#fff" stroke-width="1.6"><path d="M3.700 8.500L6.700 11.300 12.300 6.100"/></svg>
<div class="cb" style="left:16px;top:207.29999999999995px"></div>
<svg class="i" style="left:16px;top:207.29999999999995px" width="16" height="16" viewBox="0 0 16 16" stroke="#fff" stroke-width="1.6"><path d="M3.700 8.500L6.700 11.300 12.300 6.100"/></svg>
<span class="t" style="left:40.7px;top:13.0px;font-size:14.42px;color:#1f2328;letter-spacing:-0.397px;">Test Case ID</span>
<span class="t" style="left:40.7px;top:45.0px;font-size:14.42px;color:#1f2328;letter-spacing:-0.170px;">Test Case Title</span>
<span class="t" style="left:40.7px;top:77.0px;font-size:14.42px;color:#1f2328;letter-spacing:-0.253px;">Project Name</span>
<span class="t" style="left:40.7px;top:109.0px;font-size:14.42px;color:#1f2328;letter-spacing:-0.367px;">Folder Name</span>
<span class="t" style="left:40.7px;top:141.0px;font-size:14.42px;color:#1f2328;letter-spacing:-0.056px;">Description</span>
<span class="t" style="left:40.7px;top:173.0px;font-size:14.42px;color:#1f2328;letter-spacing:-0.118px;">Priority</span>
<span class="t" style="left:40.7px;top:205.0px;font-size:14.42px;color:#1f2328;letter-spacing:-0.411px;">Type</span>
</div>
<div class="abs" style="left:436px;top:571px;width:640px;height:1px;background:#e4e8ec"></div>
<div class="btn" style="left:452px;top:584.3px;width:202px;height:32.3px;background:#eaeef3;border-color:#d5dae1"></div>
<div class="caret" style="left:633px;top:598.9px;border-top-color:#57606a"></div>
<div class="btn" style="left:862.5px;top:584.5px;width:70.8px;height:32px"></div>
<div class="abs" style="left:941.500px;top:584.500px;width:118.500px;height:32px;border-radius:6px;background:#1f883d"></div>
<!-- popover -->
<div class="abs" style="left:452px;top:620.8px;width:300px;height:194px;border-radius:12px;background:#fff;box-shadow:0 0 0 1px rgba(208,215,222,.5),0 6px 18px rgba(66,74,83,.18)"></div>
<div class="abs" style="left:452px;top:661.5px;width:300px;height:1px;background:#eaeef2"></div>
<svg class="i" style="left:469px;top:679px" width="16" height="16" viewBox="0 0 16 16" stroke="#1f2328" stroke-width="1.300"><path d="M2.900 8.700l3.200 3.100 7.200-7.500"/></svg>
<!-- arrow -->
<svg class="i" style="left:340px;top:590px" width="112" height="24" viewBox="0 0 112 24"><path d="M3.300 13.100L93 11.200" stroke="#ff2407" stroke-width="2.900" stroke-linecap="butt"/><path d="M92.100 4L106.600 10.900 92.100 18.400z" fill="#ff2407" stroke="none"/></svg>

<span class="t" style="left:448.4px;top:212.0px;font-size:14.42px;color:#1f2328;letter-spacing:0.159px;-webkit-text-stroke:0.52px #1f2328;">Select Fields for Export</span>
<span class="t" style="left:448.4px;top:237.0px;font-size:12.36px;color:#1f2328;letter-spacing:0.032px;">Choose which test case fields to include in the exported CSV file</span>
<span class="t" style="left:481.5px;top:272.0px;font-size:14.42px;color:#656d76;letter-spacing:-0.216px;">Search Field</span>
<span class="t" style="left:479.7px;top:315.0px;font-size:14.42px;color:#1f2328;letter-spacing:0.116px;-webkit-text-stroke:0.52px #1f2328;">25 Fields Selected</span>
<span class="t" style="left:465.4px;top:590.5px;font-size:14.42px;color:#1f2328;letter-spacing:0.078px;-webkit-text-stroke:0.52px #1f2328;">CSV Layout: Single Row</span>
<span class="t" style="left:875.7px;top:590.5px;font-size:14.42px;color:#1f2328;letter-spacing:-0.009px;-webkit-text-stroke:0.22px #1f2328;">Cancel</span>
<span class="t" style="left:955.0px;top:590.5px;font-size:14.42px;color:#ffffff;letter-spacing:0.010px;-webkit-text-stroke:0.22px #ffffff;">Export to CSV</span>
<span class="t" style="left:469.7px;top:631.5px;font-size:14.42px;color:#1f2328;letter-spacing:-0.177px;-webkit-text-stroke:0.52px #1f2328;">CSV Layout</span>
<span class="t" style="left:493.4px;top:676.5px;font-size:14.42px;color:#1f2328;letter-spacing:-0.319px;">Single Row</span>
<span class="t" style="left:493.4px;top:696.5px;font-size:12.36px;color:#656d76;letter-spacing:0.112px;">Steps, outcomes or BDDs in one row per</span>
<span class="t" style="left:493.4px;top:714.5px;font-size:12.36px;color:#656d76;letter-spacing:0.191px;">test case</span>
<span class="t" style="left:493.4px;top:744.0px;font-size:14.42px;color:#1f2328;letter-spacing:-0.089px;">Multiple Rows</span>
<span class="t" style="left:493.4px;top:764.0px;font-size:12.36px;color:#656d76;letter-spacing:0.112px;">Steps, outcomes or BDDs in separate</span>
<span class="t" style="left:493.4px;top:782.0px;font-size:12.36px;color:#656d76;letter-spacing:-0.103px;">rows</span>
</body>
</html>
